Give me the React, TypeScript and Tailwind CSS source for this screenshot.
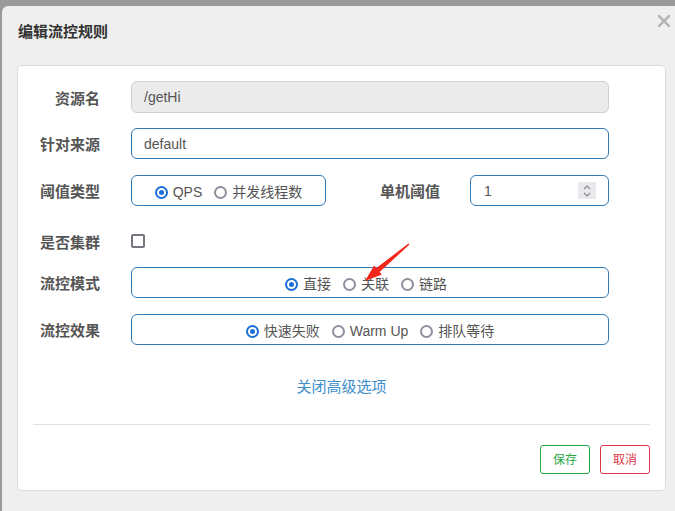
const font = { fontFamily: '"Liberation Sans", "Noto Sans CJK SC", sans-serif' };

function Radio({ checked, label }: { checked?: boolean; label: string }) {
  return (
    <span className="flex items-center gap-[5px] mt-[4px]">
      {checked ? (
        <span className="w-[13px] h-[13px] rounded-full border-2 border-[#1a6fd8] grid place-items-center">
          <span className="w-[5px] h-[5px] rounded-full bg-[#1a6fd8]" />
        </span>
      ) : (
        <span className="w-[13px] h-[13px] rounded-full border-2 border-[#8f8f9d]" />
      )}
      <span className="text-[14px] text-[#555]">{label}</span>
    </span>
  );
}

function Label({ children, w = 'w-[67px]' }: { children: string; w?: string }) {
  return <div className={`${w} shrink-0 mt-[4px] text-right text-[15px] font-bold text-[#555]`}>{children}</div>;
}

export default function App() {
  return (
    <div className="w-[675px] h-[511px] overflow-hidden bg-[#9a9a9a] pt-[6px] pl-[2px] relative" style={font}>
      <div className="bg-[#efefef] rounded-tl-[6px] h-full relative">
        {/* header */}
        <div className="h-[59px] flex items-start pl-[16px] pt-[16px]">
          <h4 className="text-[15px] leading-[20px] font-bold text-[#333]">编辑流控规则</h4>
        </div>
        <svg className="absolute left-[656px] top-[9px]" width="12" height="12" viewBox="0 0 12 12">
          <path d="M1 1 L11 11 M11 1 L1 11" stroke="#b2b2b2" strokeWidth="2.4" strokeLinecap="round" />
        </svg>

        {/* body card */}
        <div className="ml-[15px] w-[649px] h-[426px] bg-white border border-[#dcdcdc] rounded-[5px] px-[15px] pt-[15px]">
          <div className="flex items-center h-[32px]">
            <Label>资源名</Label>
            <div className="ml-[31px] w-[478px] h-[32px] bg-[#ebebeb] border border-[#cfcfcf] rounded-[6px] flex items-center px-[12px] pt-[1px] text-[14px] text-[#555]">
              /getHi
            </div>
          </div>

          <div className="flex items-center h-[31px] mt-[15px]">
            <Label>针对来源</Label>
            <div className="ml-[31px] w-[478px] h-[31px] border border-[#337ab7] rounded-[6px] flex items-center px-[12px] pt-[1px] text-[14px] text-[#555]">
              default
            </div>
          </div>

          <div className="flex items-center h-[31px] mt-[16px]">
            <Label>阈值类型</Label>
            <div className="ml-[31px] w-[195px] h-[31px] border border-[#337ab7] rounded-[6px] flex items-center justify-center gap-[12px]">
              <Radio checked label="QPS" />
              <Radio label="并发线程数" />
            </div>
            <Label w="w-[114px]">单机阈值</Label>
            <div className="ml-[30px] w-[139px] h-[31px] border border-[#337ab7] rounded-[6px] flex items-center justify-between pl-[13px] pr-[12px] text-[14px] text-[#555]">
              <span className="mt-[1px]">1</span>
              <span className="w-[18px] h-[17px] bg-[#e9e9ed] flex flex-col items-center justify-center">
                <svg width="10" height="14" viewBox="0 0 10 14">
                  <path d="M2 5 L5 2 L8 5 M2 9 L5 12 L8 9" fill="none" stroke="#8a8a8a" strokeWidth="1.2" />
                </svg>
              </span>
            </div>
          </div>

          <div className="flex items-center h-[32px] mt-[19px]">
            <Label>是否集群</Label>
            <span className="ml-[31px] w-[14px] h-[14px] border-2 border-[#767680] rounded-[2px]" />
          </div>

          <div className="flex items-center h-[31px] mt-[10px]">
            <Label>流控模式</Label>
            <div className="ml-[31px] w-[478px] h-[31px] border border-[#337ab7] rounded-[6px] flex items-center justify-center gap-[12px] pr-[8px]">
              <Radio checked label="直接" />
              <Radio label="关联" />
              <Radio label="链路" />
            </div>
          </div>

          <div className="flex items-center h-[31px] mt-[16px]">
            <Label>流控效果</Label>
            <div className="ml-[31px] w-[478px] h-[31px] border border-[#337ab7] rounded-[6px] flex items-center justify-center gap-[12px]">
              <Radio checked label="快速失败" />
              <Radio label="Warm Up" />
              <Radio label="排队等待" />
            </div>
          </div>

          <div className="mt-[32px] text-center text-[15px] leading-[20px] text-[#3c8dcc]">关闭高级选项</div>

          <div className="mt-[27px] border-t border-[#e0e0e0]" />

          <div className="flex justify-end gap-[10px] mt-[20px] pr-[0px]">
            <button className="w-[50px] h-[29px] border border-[#28a745] rounded-[3px] text-[12px] text-[#28a745]">保存</button>
            <button className="w-[50px] h-[29px] border border-[#dc3545] rounded-[3px] text-[12px] text-[#dc3545]">取消</button>
          </div>
        </div>
      </div>

      {/* annotation arrow */}
      <svg className="absolute left-0 top-0 pointer-events-none" width="675" height="511">
        <polygon
          points="365,281 381.9,274.6 379.6,271.9 409.5,244.6 408.5,243.4 376.4,268.1 374.1,265.4"
          fill="#f2261b"
        />
      </svg>
    </div>
  );
}
